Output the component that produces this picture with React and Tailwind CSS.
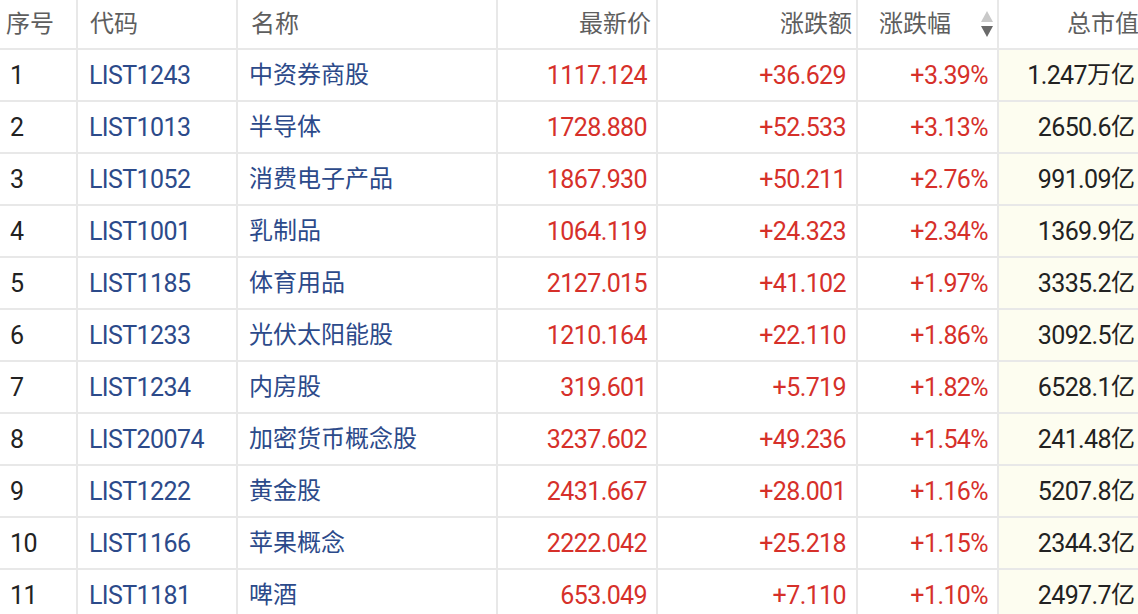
import React from 'react';

const rows = [
  ['1', 'LIST1243', '中资券商股', '1117.124', '+36.629', '+3.39%', '1.247', '万亿'],
  ['2', 'LIST1013', '半导体', '1728.880', '+52.533', '+3.13%', '2650.6', '亿'],
  ['3', 'LIST1052', '消费电子产品', '1867.930', '+50.211', '+2.76%', '991.09', '亿'],
  ['4', 'LIST1001', '乳制品', '1064.119', '+24.323', '+2.34%', '1369.9', '亿'],
  ['5', 'LIST1185', '体育用品', '2127.015', '+41.102', '+1.97%', '3335.2', '亿'],
  ['6', 'LIST1233', '光伏太阳能股', '1210.164', '+22.110', '+1.86%', '3092.5', '亿'],
  ['7', 'LIST1234', '内房股', '319.601', '+5.719', '+1.82%', '6528.1', '亿'],
  ['8', 'LIST20074', '加密货币概念股', '3237.602', '+49.236', '+1.54%', '241.48', '亿'],
  ['9', 'LIST1222', '黄金股', '2431.667', '+28.001', '+1.16%', '5207.8', '亿'],
  ['10', 'LIST1166', '苹果概念', '2222.042', '+25.218', '+1.15%', '2344.3', '亿'],
  ['11', 'LIST1181', '啤酒', '653.049', '+7.110', '+1.10%', '2497.7', '亿'],
];

const cols = 'grid grid-cols-[78px_160px_260px_160px_200px_141px_147px]';
const cell = 'flex items-center border-r-2 border-b-2 border-[#e8e8e8] whitespace-nowrap';
const num = 'text-[25px] tracking-[-0.6px]';

// sort arrows next to 涨跌幅
const SortIcon = () => (
  <svg width="12" height="27" viewBox="0 0 12 27" className="ml-[30px]">
    <path d="M6 0 L12 11 L0 11 Z" fill="#c9c9c9" />
    <path d="M0 15 L12 15 L6 26 Z" fill="#6a6a6a" />
  </svg>
);

export default function App() {
  return (
    <div
      className="w-[1138px] h-[614px] overflow-hidden bg-white text-[24px] leading-none"
      style={{ fontFamily: 'Roboto, "Noto Sans CJK SC", sans-serif' }}
    >
      <div className="w-[1146px]">
        {/* header */}
        <div className={`${cols} h-[50px] text-[#5e5e5e]`}>
          <div className={`${cell} pl-[6px]`}>序号</div>
          <div className={`${cell} pl-[12px]`}>代码</div>
          <div className={`${cell} pl-[13px]`}>名称</div>
          <div className={`${cell} justify-end pr-[5px]`}>最新价</div>
          <div className={`${cell} justify-end pr-[4px]`}>涨跌额</div>
          <div className={`${cell} pl-[21px]`}>
            涨跌幅
            <SortIcon />
          </div>
          <div className={`${cell} justify-end pr-[5px] border-r-0`}>总市值</div>
        </div>

        {/* body */}
        {rows.map((r) => (
          <div key={r[0]} className={`${cols} h-[52px]`}>
            <div className={`${cell} ${num} pl-[10px] text-[#222]`}>{r[0]}</div>
            <div className={`${cell} ${num} pl-[11px] text-[#2c4a8a]`}>{r[1]}</div>
            <div className={`${cell} pl-[11px] text-[#2c4a8a]`}>{r[2]}</div>
            <div className={`${cell} ${num} justify-end pr-[9px] text-[#d6302a]`}>{r[3]}</div>
            <div className={`${cell} ${num} justify-end pr-[10px] text-[#d6302a]`}>{r[4]}</div>
            <div className={`${cell} ${num} justify-end pr-[9px] text-[#d6302a]`}>{r[5]}</div>
            <div className={`${cell} justify-end pr-[9px] border-r-0 bg-[#fdfdf0] text-[#222]`}>
              <span className={num}>{r[6]}</span>
              <span>{r[7]}</span>
            </div>
          </div>
        ))}
      </div>
    </div>
  );
}
